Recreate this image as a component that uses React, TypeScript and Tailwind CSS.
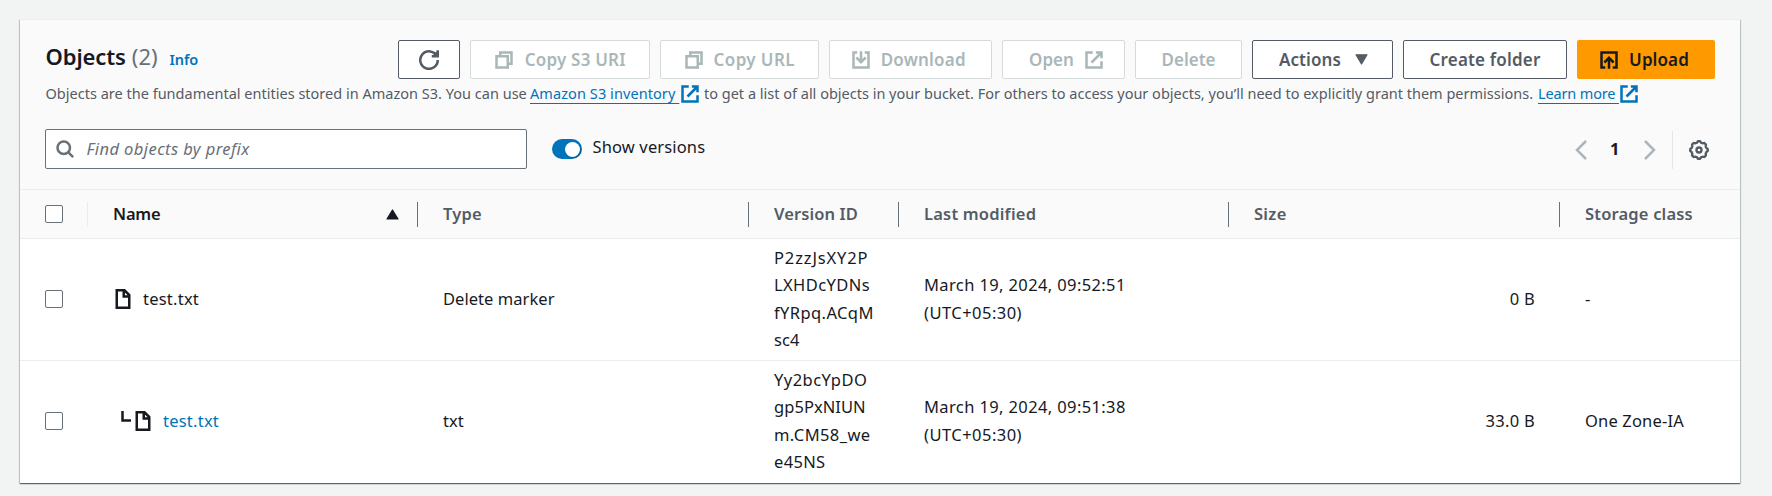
import type { ReactNode } from "react";

function Svg({ children, className = "size-5" }: { children: ReactNode; className?: string }) {
  return (
    <svg viewBox="0 0 16 16" fill="none" stroke="currentColor" strokeWidth="2" className={`shrink-0 ${className}`}>
      {children}
    </svg>
  );
}

const RefreshIcon = () => (
  <Svg>
    <path d="M10.2 5H15V.2M15 8a7 7 0 1 1-.7-3" />
    <path d="M12.2 3.2 14.2 1.8V4.2h-2z" fill="currentColor" strokeWidth="1" />
  </Svg>
);
const CopyIcon = () => (
  <Svg>
    <path d="M2 5h9v9H2zM5 5V2h9v9h-3" />
  </Svg>
);
const ExternalIcon = () => (
  <Svg>
    <path d="M9.5 2H14v4.5M6 10l8-8M14 9v5H2V2h5" />
  </Svg>
);
const DownloadIcon = () => (
  <Svg>
    <path d="M5 2H2v12h12V2h-3M8 1v8.5M4.3 6 8 9.7 11.7 6" />
  </Svg>
);
const UploadIcon = () => (
  <Svg>
    <path d="M5 14H2V2h12v12h-3M8 15V6.5M4.3 10 8 6.3l3.7 3.7" />
  </Svg>
);
const SearchIcon = () => (
  <Svg>
    <circle cx="7" cy="7" r="5" />
    <path d="m10.5 10.5 4 4" />
  </Svg>
);
const FileIcon = () => (
  <Svg>
    <path d="M3 1h6.2L13 4.8V15H3zM8.6 1v5H13" />
  </Svg>
);

const gearPath =
  Array.from({ length: 96 }, (_, i) => {
    const a = (i / 96) * Math.PI * 2;
    const r = 6.55 + 0.6 * Math.max(-0.8, Math.min(0.8, 1.4 * Math.cos(8 * a)));
    return `${i ? "L" : "M"}${(8 + r * Math.cos(a)).toFixed(2)} ${(8 + r * Math.sin(a)).toFixed(2)}`;
  }).join("") + "z";

const GearIcon = () => (
  <Svg>
    <path d={gearPath} strokeWidth="1.9" />
    <circle cx="8" cy="8" r="2" strokeWidth="1.9" />
  </Svg>
);

const variants = {
  normal: "border border-[#545b64] bg-white text-[#545b64]",
  disabled: "border border-[#d5dbdb] bg-white text-[#aab7b8]",
  primary: "bg-[#ff9900] text-[#16191f]",
};

function Button({
  variant = "normal",
  className,
  children,
}: {
  variant?: keyof typeof variants;
  className: string;
  children: ReactNode;
}) {
  return (
    <button
      className={`flex h-[39px] shrink-0 items-center justify-center rounded-[2px] text-[17px] leading-[25px] font-semibold whitespace-nowrap ${variants[variant]} ${className}`}
    >
      {children}
    </button>
  );
}

const Checkbox = () => (
  <span className="ml-[25px] block size-[18px] rounded-[2px] border border-[#687078] bg-white" />
);

function Head({
  label,
  className = "",
  children,
  last = false,
}: {
  label: string;
  className?: string;
  children?: ReactNode;
  last?: boolean;
}) {
  return (
    <div className={`flex h-[25px] items-center pl-[25px] font-semibold ${last ? "" : "border-r border-[#687078]"} ${className}`}>
      <span className="flex-1">{label}</span>
      {children}
    </div>
  );
}

const cols = "grid grid-cols-[68px_330px_331px_150px_330px_331px_1fr] items-center";

function Row({
  name,
  type,
  version,
  date,
  size,
  storage,
}: {
  name: ReactNode;
  type: string;
  version: [string, string][];
  date: string;
  size: ReactNode;
  storage: ReactNode;
}) {
  return (
    <div className={`${cols} h-[121px] pb-px`}>
      <Checkbox />
      {name}
      <div className="pl-[25px] tracking-[0.05px]">{type}</div>
      <div className="pb-px pl-[25px]">
        {version.map(([text, tracking]) => (
          <div key={text} className={tracking}>
            {text}
          </div>
        ))}
      </div>
      <div className="pb-px pl-[25px]">
        <div className="tracking-[0.38px]">{date}</div>
        <div className="tracking-[0.47px]">(UTC+05:30)</div>
      </div>
      <div className="pr-[25px] text-right tracking-[0.3px]">{size}</div>
      <div className="pl-[25px] tracking-[0.17px]">{storage}</div>
    </div>
  );
}

export default function App() {
  return (
    <div className="h-[496px] w-[1772px] overflow-hidden bg-[#f2f3f3] pt-[19px] pl-5 font-['Noto_Sans',sans-serif] text-[16.5px] leading-[27.5px] text-[#16191f]">
      <div className="h-[464px] w-[1720px] border-t border-[#eaeded] bg-white shadow-[0_1px_1px_0_rgba(0,28,36,0.5),1px_1px_1px_0_rgba(0,28,36,0.15),-1px_1px_1px_0_rgba(0,28,36,0.15)]">
        <header className="h-[170px] border-b border-[#eaeded] bg-[#fafafa] px-[25px] pt-5">
          <div className="flex h-[41px] justify-between">
            <div className="flex items-baseline pl-[0.5px] leading-[33px]">
              <h2 className="text-[22px] font-semibold tracking-[-0.1px]">Objects</h2>
              <span className="ml-[6px] text-[22px] text-[#687078]">(2)</span>
              <a className="ml-[12px] text-[14.5px] font-semibold tracking-[-0.1px] text-[#0073bb]">Info</a>
            </div>
            <div className="flex gap-2.5">
              <Button className="w-[62px]">
                <RefreshIcon />
              </Button>
              <Button variant="disabled" className="w-[180px] gap-[10.5px] tracking-[0.2px]">
                <CopyIcon />
                Copy S3 URI
              </Button>
              <Button variant="disabled" className="w-[159px] gap-[9.5px] tracking-[0.4px]">
                <CopyIcon />
                Copy URL
              </Button>
              <Button variant="disabled" className="w-[163px] gap-[9.5px] pr-[4px] tracking-[0.2px]">
                <DownloadIcon />
                Download
              </Button>
              <Button variant="disabled" className="w-[123px] gap-2.5 pl-[6px]">
                Open
                <ExternalIcon />
              </Button>
              <Button variant="disabled" className="w-[107px]">
                Delete
              </Button>
              <Button className="w-[141px] gap-[14px] pl-[2px] tracking-[0.1px]">
                Actions
                <svg viewBox="0 0 13 11" className="h-[11px] w-[13px]">
                  <path d="M1 .8h11L6.5 10z" fill="currentColor" stroke="currentColor" strokeWidth="1.2" strokeLinejoin="round" />
                </svg>
              </Button>
              <Button className="w-[164px] tracking-[0.18px]">Create folder</Button>
              <Button variant="primary" className="w-[138px] gap-2.5 pr-[4px] tracking-[0.1px]">
                <UploadIcon />
                Upload
              </Button>
            </div>
          </div>
          <div className="flex h-[25px] items-center text-[14.5px] leading-[25px] whitespace-pre text-[#545b64]">
            <span className="w-[485px] pl-[0.5px] tracking-[0.01px]">
              Objects are the fundamental entities stored in Amazon S3. You can use
            </span>
            <a className="w-[150px] tracking-[0.08px] text-[#0073bb] underline decoration-1 underline-offset-[4px] [text-decoration-skip-ink:none]">
              {"Amazon S3 inventory\u00a0"}
            </a>
            <span className="text-[#0073bb]">
              <ExternalIcon />
            </span>
            <span className="ml-[4px] w-[834px]">
              to get a list of all objects in your bucket. For others to access your objects, you’ll need to explicitly grant them permissions.
            </span>
            <a className="w-[81px] tracking-[-0.15px] text-[#0073bb] underline decoration-1 underline-offset-[4px] [text-decoration-skip-ink:none]">
              {"Learn more\u00a0"}
            </a>
            <span className="text-[#0073bb]">
              <ExternalIcon />
            </span>
          </div>
          <div className="mt-[23px] flex h-10 items-center">
            <div className="flex h-10 w-[482px] items-center rounded-[2px] border border-[#687078] bg-white pl-[9px] text-[#687078]">
              <SearchIcon />
              <span className="ml-[11.5px] tracking-[0.42px] italic">Find objects by prefix</span>
            </div>
            <span className="ml-[25px] flex h-5 w-[30px] items-center justify-end rounded-full bg-[#0073bb] pr-[2px]">
              <span className="size-[15px] rounded-full bg-white shadow-[1px_1px_1px_rgba(0,0,0,0.25)]" />
            </span>
            <span className="mb-[4px] ml-[10.5px] tracking-[0.14px]">Show versions</span>
            <div className="ml-auto flex h-full items-center pr-[6px]">
              <svg viewBox="0 0 12 20" className="mt-[2px] h-5 w-3" fill="none" stroke="#aab7b8" strokeWidth="2.5">
                <path d="m11 1-9 9 9 9" />
              </svg>
              <span className="mb-px ml-[23px] w-[10px] font-bold">1</span>
              <svg viewBox="0 0 12 20" className="mt-[2px] ml-[24px] h-5 w-3" fill="none" stroke="#aab7b8" strokeWidth="2.5">
                <path d="m1 1 9 9-9 9" />
              </svg>
              <span className="mt-px ml-[16px] h-[38px] w-px bg-[#e3e7e7]" />
              <span className="mt-[2px] ml-[16px] text-[#545b64]">
                <GearIcon />
              </span>
            </div>
          </div>
        </header>

        <div className={`${cols} h-[49px] border-b border-[#eaeded] bg-[#fafafa] text-[#545b64]`}>
          <div className="flex h-[25px] items-center border-r border-[#eaeded]">
            <Checkbox />
          </div>
          <Head label="Name" className="pr-[18px] tracking-[-0.2px] text-[#16191f]">
            <svg viewBox="0 0 13 11" className="h-[11px] w-[13px]">
              <path d="M1 10h11L6.5 1z" fill="currentColor" stroke="currentColor" strokeWidth="1.2" strokeLinejoin="round" />
            </svg>
          </Head>
          <Head label="Type" className="tracking-[0.2px]" />
          <Head label="Version ID" className="tracking-[0.1px]" />
          <Head label="Last modified" className="tracking-[0.2px]" />
          <Head label="Size" className="tracking-[0.3px]" />
          <Head label="Storage class" className="tracking-[0.18px]" last />
        </div>

        <Row
          name={
            <div className="flex items-center pl-[25px]">
              <FileIcon />
              <span className="ml-[10px] tracking-[0.23px]">test.txt</span>
            </div>
          }
          type="Delete marker"
          version={[
            ["P2zzJsXY2P", "tracking-[0.87px]"],
            ["LXHDcYDNs", "tracking-[0.4px]"],
            ["fYRpq.ACqM", "tracking-[0.4px]"],
            ["sc4", "tracking-[0.08px]"],
          ]}
          date="March 19, 2024, 09:52:51"
          size="0 B"
          storage="-"
        />
        <div className="h-px bg-[#eaeded]" />
        <Row
          name={
            <div className="flex items-center pl-[32px]">
              <svg viewBox="0 0 12 20" className="h-5 w-3" fill="none" stroke="currentColor" strokeWidth="2.5">
                <path d="M2.5 0v9.5H11" />
              </svg>
              <span className="ml-px">
                <FileIcon />
              </span>
              <span className="ml-[10px] tracking-[0.23px] text-[#0073bb]">test.txt</span>
            </div>
          }
          type="txt"
          version={[
            ["Yy2bcYpDO", "tracking-[0.46px]"],
            ["gp5PxNIUN", "tracking-[0.05px]"],
            ["m.CM58_we", "tracking-[0.4px]"],
            ["e45NS", "tracking-[0.34px]"],
          ]}
          date="March 19, 2024, 09:51:38"
          size="33.0 B"
          storage="One Zone-IA"
        />
      </div>
    </div>
  );
}
